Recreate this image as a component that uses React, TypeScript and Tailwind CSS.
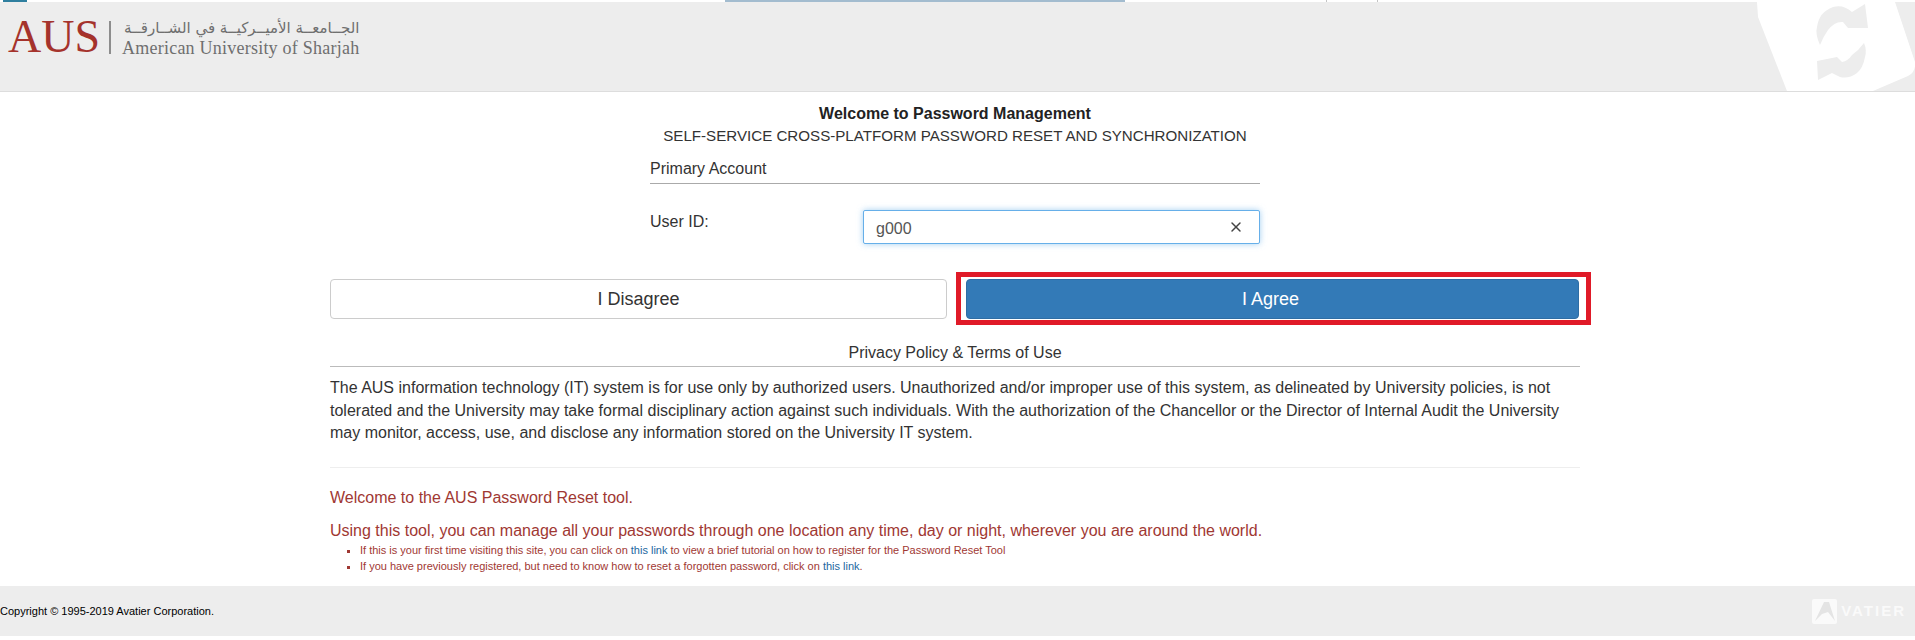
import { X } from 'lucide-react';

function SyncBadge() {
  return (
    <svg className="absolute right-0 top-0" width="170" height="89" viewBox="0 0 170 89">
      <path d="M12 0 L13 15 L42 89 L128 89 L163 74 Q171 70 170 60 L150 0 Z" fill="#ffffff" />
      <path d="M75 43 Q70 32 72 25 Q74 10 88 5 Q98 2 107 10 L120 2 L123 26 L103 26 L98 20 Q90 19 83 28 Q78 35 75 43 Z" fill="#ededed" />
      <path d="M73 78 L72 59 L92 55 L97 60 Q103 59 107 53 Q114 48 119 41 Q122 48 120 55 Q118 66 112 71 Q104 77 95 75 L87 71 Z" fill="#ededed" />
    </svg>
  );
}

function AusLogo() {
  return (
    <div className="flex items-center">
      <span className="font-['Liberation_Serif',serif] text-[46px] leading-none text-[#a5332c]">AUS</span>
      <span className="ml-[9px] h-[33px] w-0.5 bg-[#8d8d8d]" />
      <div className="ml-[11px] flex flex-col text-[#6f6f6f]">
        <span dir="rtl" className="font-['DejaVu_Sans',sans-serif] text-[15px] leading-[22px]">
          الجــامعــة الأميــركيــة في الشــارقــة
        </span>
        <span className="font-['Liberation_Serif',serif] text-[18px] leading-[19px] tracking-[0.23px]">
          American University of Sharjah
        </span>
      </div>
    </div>
  );
}

export default function App() {
  return (
    <div className="h-[640px] overflow-hidden bg-white font-['Liberation_Sans',Arial,sans-serif] text-[#333333]">
      {/* leftover strip of the page above */}
      <div className="relative h-0.5 bg-white">
        <div className="absolute left-[3px] top-0 h-0.5 w-6 bg-[#2f7f9f]" />
        <div className="absolute left-[725px] top-0 h-0.5 w-[400px] bg-[#a3bccf]" />
        <div className="absolute left-[1326px] top-0 h-0.5 w-[52px] border-x border-[#c4c4c4]" />
      </div>

      {/* Header */}
      <div className="relative h-[90px] border-b border-[#dddddd] bg-[#ededed] pl-2 pt-3">
        <AusLogo />
        <SyncBadge />
      </div>

      {/* Body */}
      <div className="ml-[330px] flex h-[494px] w-[1250px] flex-col">
        <div className="mt-[11px] text-center text-base font-bold leading-[22px] text-[#222222]">
          Welcome to Password Management
        </div>
        <div className="text-center text-[15.13px] leading-[22px]">
          SELF-SERVICE CROSS-PLATFORM PASSWORD RESET AND SYNCHRONIZATION
        </div>

        <div className="ml-[320px] mt-[10px] w-[610px]">
          <div className="border-b border-[#aaaaaa] pb-[3px] text-base leading-[23px]">Primary Account</div>
          <div className="mt-[26px] flex items-start">
            <label className="w-[213px] text-base leading-[23px]">User ID:</label>
            <div className="flex h-[34px] w-[397px] items-center justify-between rounded-[2px] border border-[#66afe9] bg-white pl-[12px] pr-[15px] shadow-[0_0_6px_rgba(102,175,233,0.6)]">
              <span className="pt-[4px] text-base text-[#555555]">g000</span>
              <X size={16} strokeWidth={2.2} className="text-[#444444]" />
            </div>
          </div>
        </div>

        {/* Buttons */}
        <div className="mt-[28px] flex items-start justify-between">
          <button className="mt-[7px] h-10 w-[617px] rounded-[4px] border border-[#cccccc] bg-white text-lg leading-none text-[#333333]">
            I Disagree
          </button>
          <div className="-mr-[11px] border-[5px] border-[#e01a28] pb-[1px] pl-[5px] pr-[7px] pt-[2px]">
            <button className="block h-10 w-[613px] rounded-[4px] border border-[#2e6da4] bg-[#337ab7] pr-[4px] text-lg leading-none text-white">
              I Agree
            </button>
          </div>
        </div>

        {/* Terms */}
        <div className="mt-[16px] border-b border-[#bbbbbb] pb-[2px] text-center text-base leading-[23px]">
          Privacy Policy &amp; Terms of Use
        </div>
        <p className="mt-[10px] text-base leading-[22.5px]">
          The AUS information technology (IT) system is for use only by authorized users. Unauthorized and/or improper use of this system, as delineated by University policies, is not tolerated and the University may take formal disciplinary action against such individuals. With the authorization of the Chancellor or the Director of Internal Audit the University may monitor, access, use, and disclose any information stored on the University IT system.
        </p>
        <hr className="mt-[22px] border-t border-[#eeeeee]" />

        {/* Notes */}
        <div className="mt-[18px] text-base leading-[23px] text-[#9f3833]">Welcome to the AUS Password Reset tool.</div>
        <div className="mt-[10px] text-base leading-[23px] text-[#9f3833]">
          Using this tool, you can manage all your passwords through one location any time, day or night, wherever you are around the world.
        </div>
        <ul className="ml-[17px] list-[square] pl-0 text-[11px] leading-4 text-[#9f3833]">
          <li className="ml-[13px]">
            If this is your first time visiting this site, you can click on <a className="text-[#23689f]">this link</a> to view a brief tutorial on how to register for the Password Reset Tool
          </li>
          <li className="ml-[13px]">
            If you have previously registered, but need to know how to reset a forgotten password, click on <a className="text-[#23689f]">this link</a>.
          </li>
        </ul>
      </div>

      {/* Footer */}
      <div className="flex h-[50px] items-center justify-between bg-[#ededed]">
        <span className="text-[11px] text-black">Copyright © 1995-2019 Avatier Corporation.</span>
        <div className="mr-[9px] flex items-center">
          <div className="flex h-[25px] w-[25px] items-center justify-center rounded-[2px] bg-[#fafafa]">
            <svg width="20" height="21" viewBox="0 0 20 21">
              <path d="M0 20 L9 1 L14 1 L20 20 L13 11 L7 13 Z" fill="#e4e4e4" />
            </svg>
          </div>
          <span className="ml-1 text-[15px] font-bold tracking-[2px] text-[#fafafa]">VATIER</span>
        </div>
      </div>
    </div>
  );
}
